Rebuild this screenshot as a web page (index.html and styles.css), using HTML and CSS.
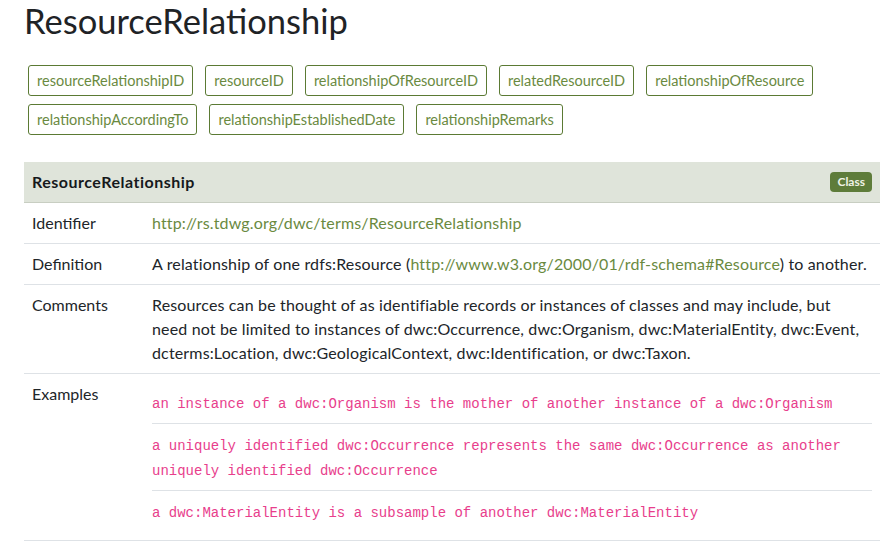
FILE: index.html
```html
<!DOCTYPE html>
<html lang="en">
<head>
<meta charset="utf-8">
<title>ResourceRelationship</title>
<link rel="stylesheet" href="styles.css">
</head>
<body>
<div class="page">
  <h1 class="title">ResourceRelationship</h1>
  <div class="terms">
    <a class="term" href="#">resourceRelationshipID</a>
    <a class="term" href="#">resourceID</a>
    <a class="term" href="#">relationshipOfResourceID</a>
    <a class="term" href="#">relatedResourceID</a>
    <a class="term" href="#">relationshipOfResource</a>
    <a class="term" href="#">relationshipAccordingTo</a>
    <a class="term" href="#">relationshipEstablishedDate</a>
    <a class="term" href="#">relationshipRemarks</a>
  </div>
  <table class="term-table">
    <thead>
      <tr class="head-row">
        <th colspan="2">
          <div class="head-inner">
            <span class="head-name">ResourceRelationship</span>
            <span class="badge">Class</span>
          </div>
        </th>
      </tr>
    </thead>
    <tbody>
      <tr>
        <td class="label">Identifier</td>
        <td class="value"><a class="link" href="#">http://rs.tdwg.org/dwc/terms/ResourceRelationship</a></td>
      </tr>
      <tr>
        <td class="label">Definition</td>
        <td class="value">A relationship of one rdfs:Resource (<a class="link" href="#">http://www.w3.org/2000/01/rdf-schema#Resource</a>) to another.</td>
      </tr>
      <tr>
        <td class="label">Comments</td>
        <td class="value comments">Resources can be thought of as identifiable records or instances of classes and may include, but need not be limited to instances of dwc:Occurrence, dwc:Organism, dwc:MaterialEntity, dwc:Event, dcterms:Location, dwc:GeologicalContext, dwc:Identification, or dwc:Taxon.</td>
      </tr>
      <tr>
        <td class="label">Examples</td>
        <td class="value">
          <table class="examples">
            <tbody>
              <tr><td><code>an instance of a dwc:Organism is the mother of another instance of a dwc:Organism</code></td></tr>
              <tr><td><code>a uniquely identified dwc:Occurrence represents the same dwc:Occurrence as another uniquely identified dwc:Occurrence</code></td></tr>
              <tr><td><code>a dwc:MaterialEntity is a subsample of another dwc:MaterialEntity</code></td></tr>
            </tbody>
          </table>
        </td>
      </tr>
    </tbody>
  </table>
</div>
</body>
</html>
```

FILE: styles.css
```css
* { box-sizing: border-box; }

html, body {
  margin: 0;
  padding: 0;
  background: #ffffff;
}

body {
  font-family: Lato, "Liberation Sans", sans-serif;
  font-size: 16px;
  line-height: 1.5;
  color: #212529;
}

.page {
  padding: 0 6px 0 24px;
}

.title {
  margin: 0;
  font-size: 34.5px;
  font-weight: 400;
  line-height: 41px;
  color: #1f2326;
}

.terms {
  display: flex;
  flex-wrap: wrap;
  gap: 8px 12px;
  padding: 0 4px;
  margin-top: 24px;
  width: 830px;
}

.term {
  display: inline-block;
  font-size: 14.5px;
  line-height: 21px;
  padding: 4px 8px;
  border: 1px solid #5b7a34;
  border-radius: 3px;
  color: #6a8a3f;
  text-decoration: none;
}

.term-table {
  margin-top: 27px;
  width: 856px;
  border-collapse: collapse;
}

.head-row th {
  background: #dfe4da;
  padding: 8px;
  text-align: left;
  border-bottom: 1px solid #c8cec2;
}

.head-inner {
  display: flex;
  align-items: center;
  justify-content: space-between;
}

.head-name {
  font-weight: 700;
  color: #16191c;
  letter-spacing: 0.5px;
}

.badge {
  font-size: 12px;
  line-height: 14px;
  padding: 3px 7px;
  border-radius: 4px;
  background: #5e7c3a;
  color: #eef2e6;
}

.term-table > tbody > tr > td {
  padding: 8px;
  vertical-align: top;
  border-bottom: 1px solid #dee2e6;
}

.term-table > tbody > tr > td.comments {
  padding-right: 18px;
}

.value {
  letter-spacing: 0.15px;
}

.label {
  width: 120px;
  color: #212529;
}

.link {
  color: #6a8a3f;
  text-decoration: none;
}

.examples {
  width: 100%;
  border-collapse: collapse;
  letter-spacing: 0;
}

.examples td {
  padding: 8px 0;
  border-bottom: 1px solid #dee2e6;
}

.examples tr:last-child td {
  border-bottom: none;
}

code {
  font-family: "Liberation Mono", monospace;
  font-size: 14px;
  color: #e83e8c;
}
```
